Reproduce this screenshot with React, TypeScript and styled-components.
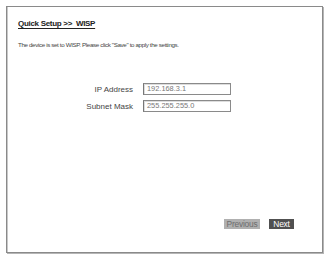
import React from "react";
import styled, { createGlobalStyle } from "styled-components";

const Global = createGlobalStyle`
  html, body { margin: 0; padding: 0; background: #fff; }
  body { font-family: "Liberation Sans", Arial, sans-serif; width: 330px; height: 259px; overflow: hidden; }
`;

const Panel = styled.div`
  box-sizing: border-box;
  margin: 6px 0 0 6px;
  width: 317px;
  height: 247px;
  border: 1px solid #8a8a8a;
  box-shadow: 1px 1px 0 #b5b5b5, inset 1px 0 0 #c8c8c8;
  padding: 11px 10px 0 11px;
  display: flex;
  flex-direction: column;
`;

const Title = styled.div`
  font-size: 8px;
  color: #222;
  text-decoration: underline;
  text-underline-offset: 1.5px;
  font-weight: bold;
  letter-spacing: -0.3px;
  line-height: 12px;
`;

const Desc = styled.div`
  margin-top: 10px;
  font-size: 6.2px;
  letter-spacing: -0.35px;
  color: #444;
  line-height: 9px;
`;

const Form = styled.div`
  margin-top: 34px;
  display: grid;
  grid-template-columns: 115px 88px;
  column-gap: 10px;
  row-gap: 5px;
  align-items: center;
`;

const Label = styled.label`
  text-align: right;
  font-size: 8px;
  color: #444;
`;

const Input = styled.div`
  box-sizing: border-box;
  height: 12px;
  border: 1px solid #8a8a8a;
  border-left-color: #777;
  box-shadow: inset 1px 1px 0 #ddd;
  font-size: 7.4px;
  color: #777;
  padding-left: 3px;
  line-height: 10px;
`;

const Footer = styled.div`
  margin-top: auto;
  margin-bottom: 23px;
  display: flex;
  justify-content: flex-end;
  gap: 9px;
  padding-right: 18px;
`;

const Button = styled.div<{ $primary?: boolean }>`
  box-sizing: border-box;
  height: 10px;
  font-size: 8.4px;
  line-height: 10px;
  letter-spacing: -0.2px;
  background: ${(p) => (p.$primary ? "#505050" : "#b0b0b0")};
  color: ${(p) => (p.$primary ? "#fff" : "#6e6e6e")};
  width: ${(p) => (p.$primary ? "25px" : "36px")};
  text-align: center;
`;

export default function App() {
  return (
    <>
      <Global />
      <Panel>
        <Title>Quick Setup &gt;&gt;&nbsp; WISP</Title>
        <Desc>The device is set to WISP. Please click "Save" to apply the settings.</Desc>
        <Form>
          <Label>IP Address</Label>
          <Input>192.168.3.1</Input>
          <Label>Subnet Mask</Label>
          <Input>255.255.255.0</Input>
        </Form>
        <Footer>
          <Button>Previous</Button>
          <Button $primary>Next</Button>
        </Footer>
      </Panel>
    </>
  );
}
